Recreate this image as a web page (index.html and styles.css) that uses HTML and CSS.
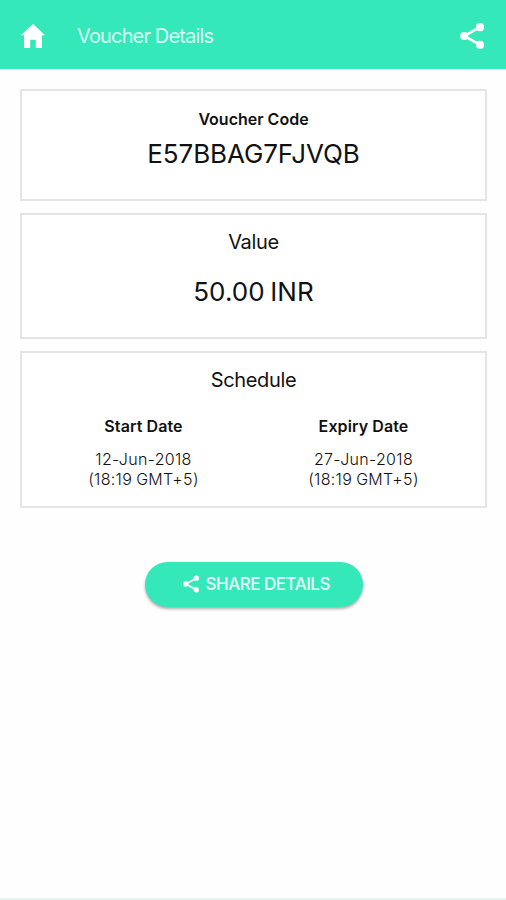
FILE: index.html
```html
<!DOCTYPE html>
<html lang="en">
<head>
<meta charset="utf-8">
<title>Voucher Details</title>
<link rel="stylesheet" href="styles.css">
</head>
<body>
<header class="bar">
  <svg class="home" viewBox="0 0 24 24"><path d="M12 0 0 11.2h3V24h6.2v-8.3h5.6V24H21V11.2h3z"/></svg>
  <h1 class="title">Voucher Details</h1>
  <svg class="share" viewBox="0 0 24 26"><path class="link" d="M20 4.2 4.2 13 20 21.8"/><circle cx="20" cy="4.2" r="4.1"/><circle cx="4.2" cy="13" r="4.1"/><circle cx="20" cy="21.8" r="4.1"/></svg>
</header>
<main class="content">
  <section class="card card-code">
    <h2 class="label">Voucher Code</h2>
    <p class="big code">E57BBAG7FJVQB</p>
  </section>
  <section class="card card-value">
    <h2 class="heading value">Value</h2>
    <p class="big amount">50.00 INR</p>
  </section>
  <section class="card card-schedule">
    <h2 class="heading schedule">Schedule</h2>
    <div class="dates">
      <div class="date"><h3 class="label start">Start Date</h3><p class="when">12-Jun-2018<br>(18:19 GMT+5)</p></div>
      <div class="date"><h3 class="label expiry">Expiry Date</h3><p class="when">27-Jun-2018<br>(18:19 GMT+5)</p></div>
    </div>
  </section>
  <button class="button" type="button">
    <svg class="button-icon" viewBox="0 0 24 26"><path class="link" d="M20 4.2 4.2 13 20 21.8"/><circle cx="20" cy="4.2" r="4.1"/><circle cx="4.2" cy="13" r="4.1"/><circle cx="20" cy="21.8" r="4.1"/></svg>
    <span>SHARE DETAILS</span>
  </button>
</main>
</body>
</html>
```
FILE: styles.css
```css
* { box-sizing: border-box; }
body {
  margin: 0;
  height: 900px;
  display: flex;
  flex-direction: column;
  background: #fefefe;
  border-bottom: 2px solid #e2f5f0;
  color: #111;
  font-family: Inter, sans-serif;
}
h1, h2, h3, p { margin: 0; white-space: nowrap; }
svg { fill: #fff; flex: none; }
.link { fill: none; stroke: #fff; stroke-width: 2.6; }
.bar {
  height: 69px;
  display: flex;
  align-items: center;
  padding: 3px 22px 0 21px;
  background: #35e8ba;
}
.home { width: 24px; height: 24px; }
.title {
  margin: -1px auto 0 32px;
  color: #d9fff5;
  font-size: 20px;
  line-height: 24px;
  font-weight: 400;
  letter-spacing: -0.85px;
}
.share { width: 24px; height: 26px; }
.content {
  display: flex;
  flex-direction: column;
  gap: 12px;
  padding: 20px 19px 0 20px;
}
.card {
  border: 2px solid #e5e5e5;
  background: #fff;
  text-align: center;
}
.card-code { height: 112px; padding-top: 18px; }
.card-value { height: 126px; padding-top: 15px; }
.card-schedule { height: 157px; padding-top: 15px; }
.label { font-size: 16px; line-height: 20px; font-weight: 600; }
.heading { font-size: 20px; line-height: 24px; font-weight: 400; letter-spacing: -0.35px; }
.big { font-size: 26px; line-height: 32px; font-weight: 400; }
.code { margin-top: 9px; letter-spacing: -0.1px; }
.amount { margin-top: 22px; word-spacing: -2px; letter-spacing: 0.1px; }
.dates { display: grid; grid-template-columns: 220px 220px; justify-content: center; margin-top: 24px; }
.start, .expiry { letter-spacing: 0.1px; }
.when { margin-top: 14px; font-size: 16px; line-height: 19.5px; font-weight: 300; letter-spacing: 0.3px; word-spacing: -0.8px; }
.button {
  align-self: center;
  width: 218px;
  height: 45px;
  margin-top: 42px;
  display: flex;
  align-items: center;
  gap: 7px;
  padding: 0 0 1px 38px;
  border: 0;
  border-radius: 23px;
  background: #35e8ba;
  box-shadow: 0 2px 3px rgba(0, 0, 0, 0.32);
  color: #e6fff8;
  font: 500 17px/20px Inter, sans-serif;
  letter-spacing: -0.5px;
  white-space: nowrap;
}
.button-icon { width: 16px; height: 18px; }
```
